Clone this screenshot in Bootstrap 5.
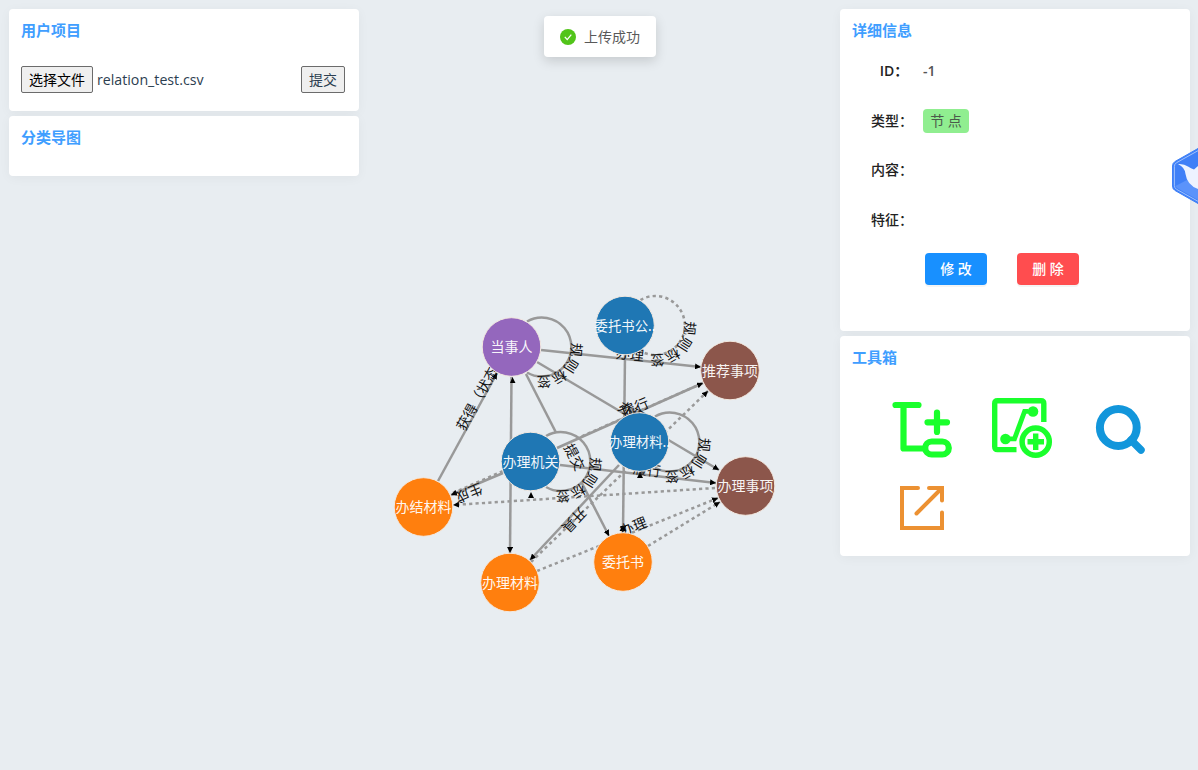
<!DOCTYPE html>
<html lang="zh-CN">
<head>
<meta charset="utf-8">
<meta name="viewport" content="width=device-width, initial-scale=1">
<title>知识图谱</title>
<link href="https://cdn.jsdelivr.net/npm/bootstrap@5.3.0/dist/css/bootstrap.min.css" rel="stylesheet">
<style>
body{background:#e8edf1;font-family:"Open Sans","Noto Sans CJK SC",sans-serif;font-size:14px;line-height:22px;color:#2c3e50;height:100vh;overflow:hidden}
.graph{position:absolute;left:0;top:0;width:1198px;height:770px}
.board{padding:9px 8px 0 9px}
.side{width:350px;gap:5px}
.panel{background:#fff;border-radius:4px;box-shadow:0 2px 12px rgba(0,0,0,.045);padding:10px 12px;position:relative}
.panel-title{color:#409eff;font-size:15px;font-weight:700;line-height:23px;margin:0}
.upload{margin-top:24px;padding-right:2px}
.native{border:1px solid #6b6b6b;border-radius:2px;background:#efefef;height:27px;padding:0 7px;line-height:24px;font-size:14px;color:#000}
.native-submit{color:#2c3e50}
.file-name{font-size:14.2px}
.h-files{height:102px}.h-map{height:60px}.h-info{height:322px}.h-tools{height:220px}
.toast-msg{position:absolute;left:544px;top:16px;width:112px;height:41px;background:#fff;border-radius:4px;box-shadow:0 4px 12px rgba(0,0,0,.15);color:#595959;gap:8px}
.info-list{margin-top:4px}
.info-label{width:55px;padding-left:3px;text-align:center;color:#222;font-weight:500;font-size:14px;white-space:nowrap}
.info-id{padding-left:7px;font-weight:600}
.info-row{height:49.7px;gap:5px;padding-left:11px}
.info-row .val{color:#555;font-weight:600}
.node-tag{background:#90ee90;border-radius:4px;width:46px;height:24px;line-height:23px;text-align:center;color:#4c5a4c}
.act{width:62px;height:32px;border:0;border-radius:4px;color:#fff;font-weight:500;padding:0;font-size:14px;line-height:32px;box-shadow:0 2px 0 rgba(0,0,0,.045)}
.act-edit{background:#1890ff}.act-del{background:#ff4d4f}
.acts{gap:30px;padding-left:73px;margin-top:8px}
.tools{display:grid;grid-template-columns:99px 99px 99px;grid-auto-rows:83px;padding:16px 0 0 30px}
.tools svg{width:80px;height:80px}
.float-logo{position:absolute;left:1172px;top:148px;width:26px;height:56px}
.edge{stroke:#999;stroke-width:2.5;fill:none}
.dash{stroke-dasharray:3.2 3.2}
.loop{fill:#e8edf1}
.graph text{font-size:14px;font-family:"Noto Sans CJK SC",sans-serif;fill:#111}
.graph .nodes text{fill:#fff;text-anchor:middle;fill-opacity:.95}
.nodes circle{stroke:#f3e9e0;stroke-width:1}
</style>
</head>
<body>
<svg class="graph" viewBox="0 0 1198 770">
<defs>
<marker id="tip" viewBox="0 0 6 6" refX="6" refY="3" markerWidth="6" markerHeight="6" markerUnits="userSpaceOnUse" orient="auto"><path d="M0 0 6 3 0 6Z"/></marker>
<path id="loopArc" d="M15.5 -25.5A29.5 29.5 0 1 1 15.5 25.5"/>
<path id="p1" d="M438 481 497 373"/>
<path id="p2" d="M541 350 700 367"/>
<path id="p3" d="M526 374 609 536"/>
<path id="p4" d="M557 448 703 383"/>
<path id="p5" d="M560 465 716 483"/>
<path id="p6" d="M503 473 451 495"/>
<path id="p7" d="M619 465 530 560"/>
<path id="p8" d="M537 571 718 498"/>
<path id="p9" d="M537 362 719 470"/>
</defs>
<g class="edge">
<path d="M526 374 609 536" marker-end="url(#tip)"/>
<path class="dash" d="M453 493 703 383"/>
<use href="#loopArc" class="loop" x="511.5" y="347"/>
<use href="#loopArc" class="loop" x="530.5" y="461.5"/>
<use href="#loopArc" class="loop" x="639.5" y="442"/>
<use href="#loopArc" class="loop dash" x="625" y="325.5"/>
<path d="M438 481 497 373" marker-end="url(#tip)"/>
<path d="M541 350 701 367" marker-end="url(#tip)"/>
<path d="M537 362 719 470" marker-end="url(#tip)"/>
<path d="M511.5 377 510 553" marker-end="url(#tip)"/>
<path d="M557 448 703 383" marker-end="url(#tip)"/>
<path d="M560 465 716 483" marker-end="url(#tip)"/>
<path d="M503 473 451 495" marker-end="url(#tip)"/>
<path d="M619 465 530 560" marker-end="url(#tip)"/>
<path d="M625 355 623 532" marker-end="url(#tip)"/>
<path class="dash" d="M715 488 453 505" marker-end="url(#tip)"/>
<path class="dash" d="M531 562 708 391" marker-end="url(#tip)"/>
<path class="dash" d="M537 571 718 498" marker-end="url(#tip)"/>
<path class="dash" d="M648 546 720 502" marker-end="url(#tip)"/>
</g>
<path d="M510 383 512.5 377 515.5 383ZM528 498 531 492 534 498ZM637 478 640 472 643 478ZM619.5 531 623 525 626.5 531Z"/>
<g>
<text><textPath href="#p1" startOffset="56">获得（状态）</textPath></text>
<text><textPath href="#p2" startOffset="75">办理</textPath></text>
<text><textPath href="#p3" startOffset="82">提交</textPath></text>
<text><textPath href="#p4" startOffset="74">履行</textPath></text>
<text><textPath href="#p9" startOffset="93">办理</textPath></text>
<text><textPath href="#p5" startOffset="73">履行</textPath></text>
<text><textPath href="#p6" startOffset="25">生成</textPath></text>
<text><textPath href="#p7" startOffset="57">开具</textPath></text>
<text><textPath href="#p8" startOffset="92">办理</textPath></text>
<g transform="translate(511.5 347)"><text><textPath href="#loopArc" startOffset="57">规则标签</textPath></text></g>
<g transform="translate(530.5 461.5)"><text><textPath href="#loopArc" startOffset="57">规则标签</textPath></text></g>
<g transform="translate(639.5 442)"><text><textPath href="#loopArc" startOffset="57">规则标签</textPath></text></g>
<g transform="translate(625 325.5)"><text><textPath href="#loopArc" startOffset="57">规则标签</textPath></text></g>
</g>
<g class="nodes">
<g transform="translate(511.5 347)"><circle r="29.3" fill="#9467bd"/><text y="5">当事人</text></g>
<g transform="translate(625 325.5)"><circle r="29.3" fill="#1f77b4"/><text y="5" textLength="61" lengthAdjust="spacingAndGlyphs">委托书公..</text></g>
<g transform="translate(730 370.5)"><circle r="29.3" fill="#8c564b"/><text y="5">推荐事项</text></g>
<g transform="translate(530.5 461.5)"><circle r="29.3" fill="#1f77b4"/><text y="5">办理机关</text></g>
<g transform="translate(639.5 442)"><circle r="29.3" fill="#1f77b4"/><text y="5" textLength="61" lengthAdjust="spacingAndGlyphs">办理材料..</text></g>
<g transform="translate(745.5 486)"><circle r="29.3" fill="#8c564b"/><text y="5">办理事项</text></g>
<g transform="translate(423.5 507)"><circle r="29.3" fill="#ff7f0e"/><text y="5">办结材料</text></g>
<g transform="translate(510 582.5)"><circle r="29.3" fill="#ff7f0e"/><text y="5">办理材料</text></g>
<g transform="translate(623 562)"><circle r="29.3" fill="#ff7f0e"/><text y="5">委托书</text></g>
</g>
</svg>

<main class="board d-flex justify-content-between align-items-start">
<div class="side d-flex flex-column">
  <section class="panel h-files">
    <h2 class="panel-title">用户项目</h2>
    <div class="upload d-flex align-items-center">
      <button class="native">选择文件</button><span class="file-name ms-1">relation_test.csv</span>
      <button class="native native-submit ms-auto">提交</button>
    </div>
  </section>
  <section class="panel h-map"><h2 class="panel-title">分类导图</h2></section>
</div>
<div class="side d-flex flex-column">
  <section class="panel h-info">
    <h2 class="panel-title">详细信息</h2>
    <div class="info-list">
      <div class="info-row d-flex align-items-center"><span class="info-label info-id">ID：</span><span class="val">-1</span></div>
      <div class="info-row d-flex align-items-center"><span class="info-label">类型：</span><span class="node-tag">节 点</span></div>
      <div class="info-row d-flex align-items-center"><span class="info-label">内容：</span></div>
      <div class="info-row d-flex align-items-center"><span class="info-label">特征：</span></div>
    </div>
    <div class="acts d-flex"><button class="act act-edit">修 改</button><button class="act act-del">删 除</button></div>
  </section>
  <section class="panel h-tools">
    <h2 class="panel-title">工具箱</h2>
    <div class="tools">
      <svg viewBox="882 385 80 80" fill="none" stroke="#1aff2c" stroke-linecap="round" stroke-linejoin="round"><path d="M895.5 405H918.5M903.5 405V448.5H925M937 412.5V432M927.5 422.3H947" stroke-width="6.2"/><rect x="925.2" y="441.5" width="23.6" height="13" rx="6.5" stroke-width="6.2"/></svg>
      <svg viewBox="981 385 80 80" fill="none" stroke="#1aff2c" stroke-width="5.4"><path d="M1043.8 422V403.5Q1043.8 400.7 1041 400.7H997.5Q994.7 400.7 994.7 403.5V446.5Q994.7 449.6 997.5 449.6H1016.5"/><circle cx="1033" cy="411.5" r="5.3" fill="#1aff2c" stroke="none"/><circle cx="1005.5" cy="439" r="5.3" fill="#1aff2c" stroke="none"/><path d="M1028 411.3H1024.6L1014.5 438.8H1010" stroke-width="4.8"/><circle cx="1035.7" cy="441.7" r="13.6" stroke-width="5.5"/><path d="M1027.5 441.7H1044M1035.7 433.5V450"/></svg>
      <svg viewBox="1080 385 80 80" fill="none" stroke="#1296db"><circle cx="1118.3" cy="427.5" r="18.4" stroke-width="8"/><path d="M1131 440 1141 450" stroke-width="7.5" stroke-linecap="round"/></svg>
      <svg viewBox="882 468 80 80" fill="none" stroke="#ec9132" stroke-width="4" stroke-linecap="round"><path d="M918 488H902V528H942V512.5M929 488H942V500.5M941 489 916.500 513.500"/></svg>
    </div>
  </section>
</div>
</main>

<div class="toast-msg d-flex align-items-center justify-content-center">
  <svg width="16" height="16" viewBox="0 0 16 16"><circle cx="8" cy="8" r="8" fill="#52c41a"/><path d="M4.8 7.9 7.2 10.6 11.3 5.600" fill="none" stroke="#fff" stroke-width="1.3"/></svg><span>上传成功</span>
</div>

<svg class="float-logo" viewBox="0 0 26 56">
<path d="M26 .5 3 13.5Q.5 15 .5 18V38Q.5 41 3 42.5L26 55.5Z" fill="#3f80f7" stroke="#3f80f7"/>
<path d="M26 2.7 4.5 14.7Q2.4 16 2.4 18.5V37.5Q2.4 40 4.5 41.3L26 53.3" fill="none" stroke="#b9d2ff" stroke-width=".8"/>
<path d="M3.5 38 15 32 26 36V52L5 40Z" fill="#5b93fb"/>
<path d="M6 16Q12 15.5 16 18.5Q19 20.5 22 21.5L26 18V41Q15 37 13.5 26Q13 19.5 6 16Z" fill="#edf3ff"/>
</svg>
<script src="https://cdn.jsdelivr.net/npm/bootstrap@5.3.0/dist/js/bootstrap.bundle.min.js"></script>
</body>
</html>
